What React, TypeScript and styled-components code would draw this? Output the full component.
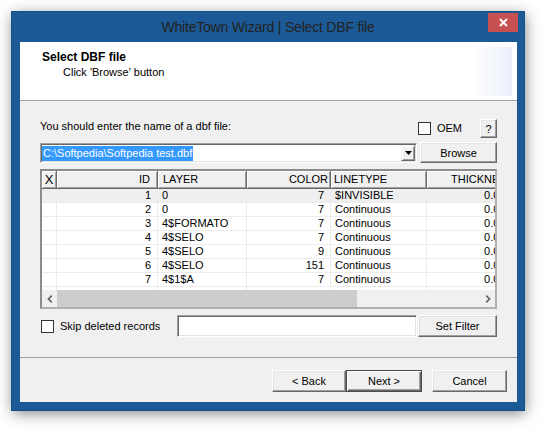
import styled, { createGlobalStyle, css } from "styled-components";

// global reset
const GlobalStyle = createGlobalStyle`
  html, body {
    margin: 0;
    padding: 0;
    background: #fff;
  }
  body {
    font-family: "Liberation Sans", Arial, sans-serif;
    font-size: 11px;
    color: #000;
  }
`;

const Page = styled.div`
  width: 545px;
  height: 431px;
  padding: 12px 0 0 12px;
  box-sizing: border-box;
  background: #fff;
  overflow: hidden;
`;

// window chrome
const Window = styled.div`
  width: 512px;
  height: 398px;
  background: #1b5a96;
  display: flex;
  flex-direction: column;
  box-shadow: 0 0 0 1px #174f85, 1px 3px 14px rgba(0, 0, 0, 0.5);
`;

const TitleBar = styled.div`
  height: 30px;
  flex: none;
  display: grid;
  grid-template-columns: 1fr auto 1fr;
  align-items: center;
`;

const TitleText = styled.div`
  grid-column: 2;
  font-size: 14px;
  letter-spacing: -0.2px;
  color: #222;
`;

const CloseButton = styled.div`
  grid-column: 3;
  justify-self: end;
  align-self: start;
  margin: 1px 6px 0 0;
  width: 30px;
  height: 19px;
  background: #c75050;
  display: flex;
  align-items: center;
  justify-content: center;
`;

const Client = styled.div`
  flex: 1;
  margin: 0 7px 8px 8px;
  background: #f0f0f0;
  display: flex;
  flex-direction: column;
`;

// wizard header
const Header = styled.div`
  height: 58px;
  flex: none;
  background: #fff;
  border-bottom: 1px solid #a0a0a0;
  display: flex;
  justify-content: space-between;
`;

const HeaderText = styled.div`
  padding: 8px 0 0 22px;
`;

const HeaderTitle = styled.div`
  font-weight: bold;
  font-size: 12px;
  line-height: 14px;
`;

const HeaderSub = styled.div`
  margin: 2px 0 0 21px;
  line-height: 13px;
`;

const HeaderArt = styled.div`
  width: 43px;
  margin: 5px 5px 4px 0;
  background: linear-gradient(to right, #fff, #ecf0fb);
`;

// body
const Body = styled.div`
  flex: 1;
  padding: 18px 20px 0;
  display: flex;
  flex-direction: column;
`;

const Row = styled.div<{ $h: number; $mt?: number }>`
  height: ${(p) => p.$h}px;
  margin-top: ${(p) => p.$mt ?? 0}px;
  flex: none;
  display: flex;
  align-items: center;
`;

const Label = styled.span<{ $mt?: number; $ml?: number }>`
  line-height: 13px;
  margin-top: ${(p) => p.$mt ?? 0}px;
  margin-left: ${(p) => p.$ml ?? 0}px;
  white-space: nowrap;
`;

const OemGroup = styled.div`
  margin-left: auto;
  display: flex;
  align-items: flex-start;
  height: 100%;
`;

const CheckBox = styled.div<{ $mt?: number; $ml?: number }>`
  width: 13px;
  height: 13px;
  box-sizing: border-box;
  border: 1px solid #333;
  background: #fff;
  flex: none;
  margin-top: ${(p) => p.$mt ?? 0}px;
  margin-left: ${(p) => p.$ml ?? 0}px;
`;

const Button = styled.div<{ $w: number; $h: number; $default?: boolean; $ml?: number }>`
  width: ${(p) => p.$w}px;
  height: ${(p) => p.$h}px;
  margin-left: ${(p) => p.$ml ?? 0}px;
  box-sizing: border-box;
  flex: none;
  display: flex;
  align-items: center;
  justify-content: center;
  background: #f0f0f0;
  border: 1px solid;
  border-color: #fff #696969 #696969 #fff;
  box-shadow: inset -1px -1px 0 #a0a0a0, inset 1px 1px 0 #e3e3e3;
  color: #000;
  white-space: nowrap;
  ${(p) =>
    p.$default &&
    css`
      border-color: #4a4a4a;
      box-shadow: inset 1px 1px 0 #fff, inset -1px -1px 0 #696969,
        inset -2px -2px 0 #a0a0a0;
    `}
`;

const Sunken = css`
  box-sizing: border-box;
  background: #fff;
  border: 1px solid;
  border-color: #a0a0a0 #fff #fff #a0a0a0;
  box-shadow: inset 1px 1px 0 #696969, inset -1px -1px 0 #e3e3e3;
`;

const Combo = styled.div`
  ${Sunken};
  width: 377px;
  height: 20px;
  margin-top: 1px;
  align-self: flex-start;
  padding: 1px;
  display: flex;
  align-items: center;
`;

const Selected = styled.span`
  background: #3399ff;
  color: #fff;
  line-height: 15px;
  padding: 0 1px;
  white-space: nowrap;
`;

const DropButton = styled.div`
  margin-left: auto;
  width: 14px;
  height: 16px;
  box-sizing: border-box;
  background: #f0f0f0;
  border: 1px solid;
  border-color: #f0f0f0 #696969 #696969 #f0f0f0;
  box-shadow: inset 1px 1px 0 #fff, inset -1px -1px 0 #a0a0a0;
  display: flex;
  align-items: center;
  justify-content: center;
`;

const FilterInput = styled.div`
  ${Sunken};
  width: 240px;
  height: 22px;
  margin-left: auto;
`;

// data grid
const Grid = styled.div`
  margin-top: 6px;
  height: 140px;
  flex: none;
  box-sizing: border-box;
  border: 2px solid;
  border-color: #8c8c8c #b0b0b0 #b0b0b0 #8c8c8c;
  background: #fff;
  display: flex;
  flex-direction: column;
  overflow: hidden;
`;

const GridHead = styled.div`
  display: flex;
  height: 18px;
  flex: none;
`;

const HeadCell = styled.div<{ $w: number; $align: string; $pad: number }>`
  width: ${(p) => p.$w}px;
  flex: none;
  box-sizing: border-box;
  background: #f0f0f0;
  border-right: 1px solid #696969;
  border-bottom: 1px solid #696969;
  box-shadow: inset 1px 1px 0 #fff, inset -1px -1px 0 #a0a0a0;
  text-align: ${(p) => p.$align};
  padding: 0 ${(p) => p.$pad}px;
  line-height: 17px;
  white-space: nowrap;
  overflow: hidden;
`;

const IndicatorHead = styled(HeadCell)`
  font-size: 13px;
  padding: 0;
  text-align: center;
`;

const GridRows = styled.div`
  flex: 1;
  overflow: hidden;
`;

const GridRow = styled.div<{ $current?: boolean }>`
  display: flex;
  height: 14px;
  background: ${(p) => (p.$current ? "#efefef" : "#fff")};
`;

const Cell = styled.div<{ $w: number; $align: string }>`
  width: ${(p) => p.$w}px;
  flex: none;
  box-sizing: border-box;
  border-right: 1px solid #ececec;
  border-bottom: 1px solid #ececec;
  text-align: ${(p) => p.$align};
  padding: ${(p) => (p.$align === "right" ? "0 6px 0 0" : "0 0 0 4px")};
  line-height: 13px;
  white-space: nowrap;
  overflow: hidden;
`;

const HScroll = styled.div`
  height: 17px;
  flex: none;
  display: flex;
  background: #f0f0f0;
`;

const ScrollArrow = styled.div`
  width: 15px;
  flex: none;
  display: flex;
  align-items: center;
  justify-content: center;
`;

const ScrollThumb = styled.div`
  width: 300px;
  flex: none;
  background: #cdcdcd;
`;

const ScrollTrack = styled.div`
  flex: 1;
`;

const Separator = styled.div`
  flex: none;
  border-top: 1px solid #a0a0a0;
`;

const Footer = styled.div`
  flex: none;
  display: flex;
  justify-content: flex-end;
  padding: 12px 10px 10px;
`;

interface IColumn {
  title: string;
  width: number;
  align: "left" | "right";
  headPad: number;
}

const columns: IColumn[] = [
  { title: "ID", width: 101, align: "right", headPad: 7 },
  { title: "LAYER", width: 89, align: "left", headPad: 5 },
  { title: "COLOR", width: 84, align: "right", headPad: 2 },
  { title: "LINETYPE", width: 96, align: "left", headPad: 3 },
  { title: "THICKNESS", width: 110, align: "right", headPad: 22 },
];

const records: string[][] = [
  ["1", "0", "7", "$INVISIBLE", "0.000000"],
  ["2", "0", "7", "Continuous", "0.000000"],
  ["3", "4$FORMATO", "7", "Continuous", "0.000000"],
  ["4", "4$SELO", "7", "Continuous", "0.000000"],
  ["5", "4$SELO", "9", "Continuous", "0.000000"],
  ["6", "4$SELO", "151", "Continuous", "0.000000"],
  ["7", "4$1$A", "7", "Continuous", "0.000000"],
  ["", "", "", "", ""],
];

const Chevron = ({ dir }: { dir: "left" | "right" }) => (
  <svg width="6" height="8" viewBox="0 0 6 8">
    <path
      d={dir === "left" ? "M4.8 0.6 L1.4 4 L4.8 7.4" : "M1.2 0.6 L4.6 4 L1.2 7.4"}
      fill="none"
      stroke="#606060"
      strokeWidth="1.6"
    />
  </svg>
);

function App() {
  return (
    <Page>
      <GlobalStyle />
      <Window>
        <TitleBar>
          <TitleText>WhiteTown Wizard | Select DBF file</TitleText>
          <CloseButton>
            <svg width="9" height="9" viewBox="0 0 9 9">
              <path d="M1 1 L8 8 M8 1 L1 8" stroke="#fff" strokeWidth="2" />
            </svg>
          </CloseButton>
        </TitleBar>
        <Client>
          <Header>
            <HeaderText>
              <HeaderTitle>Select DBF file</HeaderTitle>
              <HeaderSub>Click 'Browse' button</HeaderSub>
            </HeaderText>
            <HeaderArt />
          </Header>
          <Body>
            <Row $h={19}>
              <Label $mt={1} style={{ alignSelf: "flex-start" }}>
                You should enter the name of a dbf file:
              </Label>
              <OemGroup>
                <CheckBox $mt={3} />
                <Label $ml={6} $mt={3}>
                  OEM
                </Label>
                <Button $w={17} $h={19} $ml={18}>
                  ?
                </Button>
              </OemGroup>
            </Row>
            <Row $h={21} $mt={4}>
              <Combo>
                <Selected>C:\Softpedia\Softpedia test.dbf</Selected>
                <DropButton>
                  <svg width="7" height="4" viewBox="0 0 7 4">
                    <path d="M0 0 H7 L3.5 4 Z" fill="#000" />
                  </svg>
                </DropButton>
              </Combo>
              <Button $w={77} $h={21} $ml={3}>
                Browse
              </Button>
            </Row>
            <Grid>
              <GridHead>
                <IndicatorHead $w={15} $align="center" $pad={0}>
                  X
                </IndicatorHead>
                {columns.map((col) => (
                  <HeadCell
                    key={col.title}
                    $w={col.width}
                    $align={col.align}
                    $pad={col.headPad}
                  >
                    {col.title}
                  </HeadCell>
                ))}
              </GridHead>
              <GridRows>
                {records.map((rec, i) => (
                  <GridRow key={i} $current={i === 0}>
                    <Cell $w={15} $align="left" />
                    {columns.map((col, j) => (
                      <Cell key={col.title} $w={col.width} $align={col.align}>
                        {rec[j]}
                      </Cell>
                    ))}
                  </GridRow>
                ))}
              </GridRows>
              <HScroll>
                <ScrollArrow>
                  <Chevron dir="left" />
                </ScrollArrow>
                <ScrollThumb />
                <ScrollTrack />
                <ScrollArrow>
                  <Chevron dir="right" />
                </ScrollArrow>
              </HScroll>
            </Grid>
            <Row $h={22} $mt={6}>
              <CheckBox $ml={1} />
              <Label $ml={6}>Skip deleted records</Label>
              <FilterInput />
              <Button $w={79} $h={22} $ml={1}>
                Set Filter
              </Button>
            </Row>
          </Body>
          <Separator />
          <Footer>
            <Button $w={74} $h={22}>
              &lt; Back
            </Button>
            <Button $w={76} $h={22} $default>
              Next &gt;
            </Button>
            <Button $w={75} $h={22} $ml={10}>
              Cancel
            </Button>
          </Footer>
        </Client>
      </Window>
    </Page>
  );
}

export default App;
